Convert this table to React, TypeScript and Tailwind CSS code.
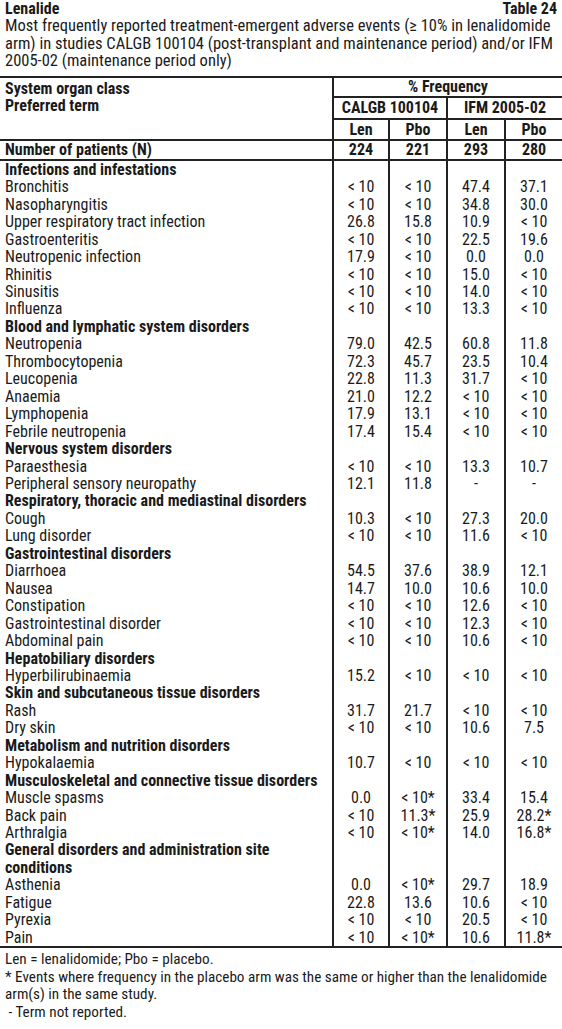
import React from "react";

type Row =
  | { h: string }
  | { l: string; v: [string, string, string, string] };

const rows: Row[] = [
  { h: "Infections and infestations" },
  { l: "Bronchitis", v: ["< 10", "< 10", "47.4", "37.1"] },
  { l: "Nasopharyngitis", v: ["< 10", "< 10", "34.8", "30.0"] },
  { l: "Upper respiratory tract infection", v: ["26.8", "15.8", "10.9", "< 10"] },
  { l: "Gastroenteritis", v: ["< 10", "< 10", "22.5", "19.6"] },
  { l: "Neutropenic infection", v: ["17.9", "< 10", "0.0", "0.0"] },
  { l: "Rhinitis", v: ["< 10", "< 10", "15.0", "< 10"] },
  { l: "Sinusitis", v: ["< 10", "< 10", "14.0", "< 10"] },
  { l: "Influenza", v: ["< 10", "< 10", "13.3", "< 10"] },
  { h: "Blood and lymphatic system disorders" },
  { l: "Neutropenia", v: ["79.0", "42.5", "60.8", "11.8"] },
  { l: "Thrombocytopenia", v: ["72.3", "45.7", "23.5", "10.4"] },
  { l: "Leucopenia", v: ["22.8", "11.3", "31.7", "< 10"] },
  { l: "Anaemia", v: ["21.0", "12.2", "< 10", "< 10"] },
  { l: "Lymphopenia", v: ["17.9", "13.1", "< 10", "< 10"] },
  { l: "Febrile neutropenia", v: ["17.4", "15.4", "< 10", "< 10"] },
  { h: "Nervous system disorders" },
  { l: "Paraesthesia", v: ["< 10", "< 10", "13.3", "10.7"] },
  { l: "Peripheral sensory neuropathy", v: ["12.1", "11.8", "-", "-"] },
  { h: "Respiratory, thoracic and mediastinal disorders" },
  { l: "Cough", v: ["10.3", "< 10", "27.3", "20.0"] },
  { l: "Lung disorder", v: ["< 10", "< 10", "11.6", "< 10"] },
  { h: "Gastrointestinal disorders" },
  { l: "Diarrhoea", v: ["54.5", "37.6", "38.9", "12.1"] },
  { l: "Nausea", v: ["14.7", "10.0", "10.6", "10.0"] },
  { l: "Constipation", v: ["< 10", "< 10", "12.6", "< 10"] },
  { l: "Gastrointestinal disorder", v: ["< 10", "< 10", "12.3", "< 10"] },
  { l: "Abdominal pain", v: ["< 10", "< 10", "10.6", "< 10"] },
  { h: "Hepatobiliary disorders" },
  { l: "Hyperbilirubinaemia", v: ["15.2", "< 10", "< 10", "< 10"] },
  { h: "Skin and subcutaneous tissue disorders" },
  { l: "Rash", v: ["31.7", "21.7", "< 10", "< 10"] },
  { l: "Dry skin", v: ["< 10", "< 10", "10.6", "7.5"] },
  { h: "Metabolism and nutrition disorders" },
  { l: "Hypokalaemia", v: ["10.7", "< 10", "< 10", "< 10"] },
  { h: "Musculoskeletal and connective tissue disorders" },
  { l: "Muscle spasms", v: ["0.0", "< 10*", "33.4", "15.4"] },
  { l: "Back pain", v: ["< 10", "11.3*", "25.9", "28.2*"] },
  { l: "Arthralgia", v: ["< 10", "< 10*", "14.0", "16.8*"] },
];

const rows2: Row[] = [
  { l: "Asthenia", v: ["0.0", "< 10*", "29.7", "18.9"] },
  { l: "Fatigue", v: ["22.8", "13.6", "10.6", "< 10"] },
  { l: "Pyrexia", v: ["< 10", "< 10", "20.5", "< 10"] },
  { l: "Pain", v: ["< 10", "< 10*", "10.6", "11.8*"] },
];

const line = "border-[#222222]";

function Val({ s }: { s: string }) {
  const star = s.endsWith("*");
  const base = star ? s.slice(0, -1) : s;
  return (
    <span className="whitespace-nowrap">
      {base}
      {star && <span>*</span>}
    </span>
  );
}

function renderRow(r: Row, i: number) {
  if ("h" in r) {
    return (
      <tr key={"h" + i} className="h-[17.45px]">
        <td className={`pl-[5px] font-bold border-r-2 ${line}`}>{r.h}</td>
        <td className={`border-r-2 ${line}`}></td>
        <td className={`border-r-2 ${line}`}></td>
        <td className={`border-r-2 ${line}`}></td>
        <td></td>
      </tr>
    );
  }
  return (
    <tr key={"d" + i} className="h-[17.45px]">
      <td className={`pl-[5px] border-r-2 ${line}`}>{r.l}</td>
      {r.v.map((v, j) => (
        <td
          key={j}
          className={`text-center ${j < 3 ? `border-r-2 ${line}` : ""}`}
        >
          <Val s={v} />
        </td>
      ))}
    </tr>
  );
}

export default function App() {
  return (
    <div className="w-[562px] bg-white text-[#1a1a1a] font-['Roboto_Condensed','Roboto',sans-serif] text-[16px] leading-[17.45px]">
      <div className="flex justify-between px-[5px] font-bold">
        <span>Lenalide</span>
        <span>Table 24</span>
      </div>
      <p className="px-[5px] text-[16.5px]">
        Most frequently reported treatment-emergent adverse events (≥ 10% in
        lenalidomide arm) in studies CALGB 100104 (post-transplant and
        maintenance period) and/or IFM 2005-02 (maintenance period only)
      </p>
      <table className="mt-[6px] w-[562px] border-collapse table-fixed">
        <colgroup>
          <col className="w-[333px]" />
          <col className="w-[56px]" />
          <col className="w-[58px]" />
          <col className="w-[58px]" />
          <col className="w-[57px]" />
        </colgroup>
        <tbody>
          <tr className={`h-[20px] border-t-2 ${line}`}>
            <td
              rowSpan={3}
              className={`align-top pl-[5px] pt-[2px] font-bold border-r-2 ${line}`}
            >
              System organ class
              <br />
              Preferred term
            </td>
            <td colSpan={4} className={`text-center font-bold border-b-2 ${line}`}>
              % Frequency
            </td>
          </tr>
          <tr className="h-[22px]">
            <td colSpan={2} className={`text-center font-bold border-r-2 border-b-2 ${line}`}>
              CALGB 100104
            </td>
            <td colSpan={2} className={`text-center font-bold border-b-2 ${line}`}>
              IFM 2005-02
            </td>
          </tr>
          <tr className={`h-[21px] border-b-2 ${line} font-bold`}>
            <td className={`text-center border-r-2 ${line}`}>Len</td>
            <td className={`text-center border-r-2 ${line}`}>Pbo</td>
            <td className={`text-center border-r-2 ${line}`}>Len</td>
            <td className="text-center">Pbo</td>
          </tr>
          <tr className={`h-[20px] border-b-2 ${line} font-bold`}>
            <td className={`pl-[5px] border-r-2 ${line}`}>Number of patients (N)</td>
            <td className={`text-center border-r-2 ${line}`}>224</td>
            <td className={`text-center border-r-2 ${line}`}>221</td>
            <td className={`text-center border-r-2 ${line}`}>293</td>
            <td className="text-center">280</td>
          </tr>
          {rows.map(renderRow)}
          <tr className="h-[34.9px]">
            <td className={`pl-[5px] font-bold border-r-2 ${line}`}>
              General disorders and administration site
              <br />
              conditions
            </td>
            <td className={`border-r-2 ${line}`}></td>
            <td className={`border-r-2 ${line}`}></td>
            <td className={`border-r-2 ${line}`}></td>
            <td></td>
          </tr>
          {rows2.map((r, i) => renderRow(r, 100 + i))}
          <tr className={`h-0 border-t-2 ${line}`}>
            <td colSpan={5}></td>
          </tr>
        </tbody>
      </table>
      <div className="px-[5px] pt-[3px] text-[15.2px]">
        <p>Len = lenalidomide; Pbo = placebo.</p>
        <p>
          * Events where frequency in the placebo arm was the same or higher
          than the lenalidomide arm(s) in the same study.
        </p>
        <p>&nbsp;- Term not reported.</p>
      </div>
    </div>
  );
}
